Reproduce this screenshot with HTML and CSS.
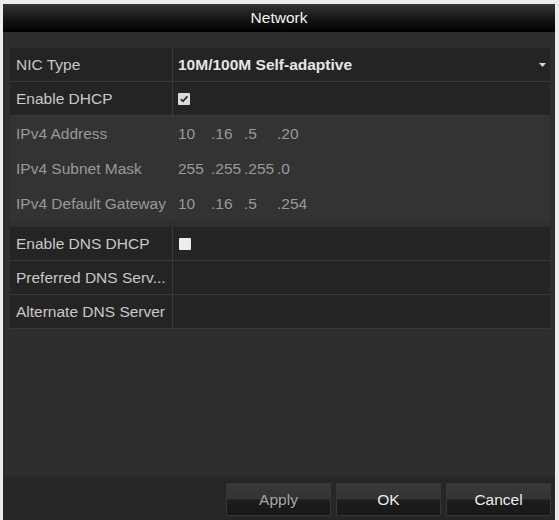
FILE: index.html
```html
<!DOCTYPE html>
<html>
<head>
<meta charset="utf-8">
<link rel="stylesheet" href="styles.css">
</head>
<body>
<div class="window">
  <div class="titlebar">Network</div>
  <div class="content">
    <div class="group">
      <div class="row dark">
        <div class="label">NIC Type</div>
        <div class="value select">
          <span class="strong">10M/100M Self-adaptive</span>
          <svg class="arrow" width="7" height="4" viewBox="0 0 7 4"><path d="M0 0H7L3.5 4Z" fill="#d8d8d8"/></svg>
        </div>
      </div>
      <div class="row dark">
        <div class="label">Enable DHCP</div>
        <div class="value">
          <span class="checkbox">
            <svg width="12" height="12" viewBox="0 0 12 12"><path d="M2.8 6.2L5 8.3L9.4 3.4" fill="none" stroke="#2a2a2a" stroke-width="1.8"/></svg>
          </span>
        </div>
      </div>
      <div class="row disabled">
        <div class="label">IPv4 Address</div>
        <div class="value ip"><span>10</span><span>.16</span><span>.5</span><span>.20</span></div>
      </div>
      <div class="row disabled">
        <div class="label">IPv4 Subnet Mask</div>
        <div class="value ip"><span>255</span><span>.255</span><span>.255</span><span>.0</span></div>
      </div>
      <div class="row disabled">
        <div class="label">IPv4 Default Gateway</div>
        <div class="value ip"><span>10</span><span>.16</span><span>.5</span><span>.254</span></div>
      </div>
    </div>
    <div class="group second">
      <div class="row dark">
        <div class="label">Enable DNS DHCP</div>
        <div class="value"><span class="checkbox empty"></span></div>
      </div>
      <div class="row dark">
        <div class="label">Preferred DNS Serv...</div>
        <div class="value"></div>
      </div>
      <div class="row dark">
        <div class="label">Alternate DNS Server</div>
        <div class="value"></div>
      </div>
    </div>
  </div>
  <div class="footer">
    <div class="btn muted">Apply</div>
    <div class="btn">OK</div>
    <div class="btn">Cancel</div>
  </div>
</div>
</body>
</html>
```

FILE: styles.css
```css
html, body {
  margin: 0;
  padding: 0;
  background: #ececec;
}
body {
  font-family: "Liberation Sans", Arial, sans-serif;
  font-size: 15.5px;
}
.window {
  margin: 4px 4px 0 3px;
  height: 516px;
  background: #2e2e2e;
  display: flex;
  flex-direction: column;
}
.titlebar {
  height: 28px;
  line-height: 27px;
  text-align: center;
  color: #f2f2f2;
  background: linear-gradient(#353535 0%, #1a1a1a 45%, #000 100%);
}
.content {
  flex: 1;
  padding: 16px 5px 0 7px;
}
.group {
  display: flex;
  flex-direction: column;
}
.group.second {
  margin-top: 6px;
}
.row {
  display: flex;
  align-items: stretch;
}
.row.dark {
  height: 33px;
  background: #242424;
  border-bottom: 1px solid #383838;
  color: #c8c8c8;
}
.row.disabled {
  height: 35px;
  background: #333333;
  color: #999999;
}
.label {
  width: 156px;
  padding-left: 6px;
  border-right: 1px solid #3a3a3a;
  display: flex;
  align-items: center;
  white-space: nowrap;
}
.row.disabled .label {
  border-right-color: #383838;
}
.value {
  flex: 1;
  padding-left: 5px;
  display: flex;
  align-items: center;
}
.select {
  justify-content: space-between;
  padding-right: 4px;
}
.strong {
  color: #e6e6e6;
  font-weight: bold;
}
.arrow {
  display: block;
}
.ip span {
  display: inline-block;
  width: 33px;
}
.checkbox {
  display: block;
  width: 12px;
  height: 12px;
  background: #dcdcdc;
  border-radius: 1px;
}
.checkbox svg {
  display: block;
}
.checkbox.empty {
  background: #ededed;
  margin-left: 1px;
}
.footer {
  height: 33px;
  padding: 6px 4px 4px;
  background: #262626;
  border-top: 1px solid #2a2a2a;
  display: flex;
  justify-content: flex-end;
  gap: 5px;
}
.btn {
  width: 103px;
  height: 31px;
  line-height: 31px;
  text-align: center;
  color: #ececec;
  border: 1px solid #363636;
  background: linear-gradient(#3a3a3a 0%, #333 48%, #1c1c1c 52%, #181818 100%);
}
.btn.muted {
  color: #a6a6a6;
}
```
